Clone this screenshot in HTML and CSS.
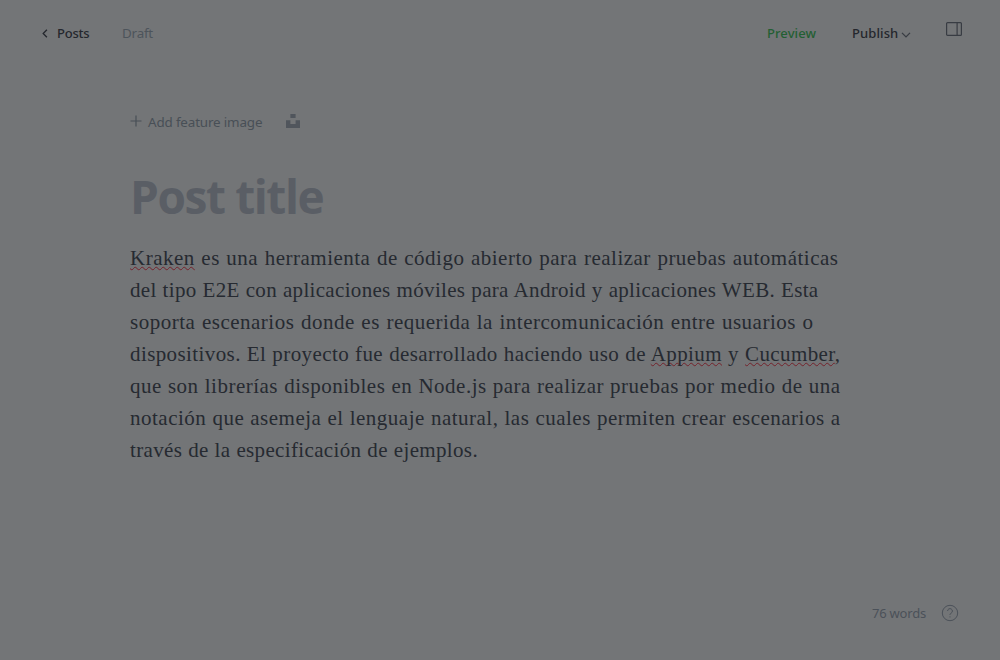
FILE: index.html
```html
<!DOCTYPE html>
<html lang="es">
<head>
<meta charset="utf-8">
<title>Editor</title>
<link rel="stylesheet" href="styles.css">
</head>
<body>
<div class="editor">
  <header class="topbar">
    <a class="back"><svg class="chevron-left" viewBox="0 0 6 9"><path d="M4.9.8 1.2 4.5l3.7 3.7"/></svg><span class="posts">Posts</span></a>
    <span class="draft">Draft</span>
    <div class="actions">
      <span class="preview">Preview</span>
      <span class="publish">Publish</span>
      <svg class="chevron-down" viewBox="0 0 10 6"><path d="m1 .9 4 4 4-4"/></svg>
      <svg class="sidebar-icon" viewBox="0 0 16 14"><rect x=".6" y=".6" width="14.8" height="12.8" rx="1"/><path d="M11.1.5v13"/></svg>
    </div>
  </header>
  <main class="content">
    <div class="feature">
      <svg class="plus" viewBox="0 0 12 12"><path d="M6 .5v11M.5 6h11"/></svg>
      <span class="add">Add feature image</span>
      <svg class="unsplash" viewBox="0 0 14 14"><path d="M4.4 0h5.2v4H4.4zM0 6.2h4.4v3.9h5.2V6.2H14V14H0z"/></svg>
    </div>
    <h1 class="title">Post title</h1>
    <p class="body">
      <span class="line l1"><u class="typo">Kraken</u> es una herramienta de código abierto para realizar pruebas automáticas</span>
      <span class="line l2">del tipo E2E con aplicaciones móviles para Android y aplicaciones WEB. Esta</span>
      <span class="line l3">soporta escenarios donde es requerida la intercomunicación entre usuarios o</span>
      <span class="line l4">dispositivos. El proyecto fue desarrollado haciendo uso de <u class="typo">Appium</u> y <u class="typo">Cucumber</u>,</span>
      <span class="line l5">que son librerías disponibles en Node.js para realizar pruebas por medio de una</span>
      <span class="line l6">notación que asemeja el lenguaje natural, las cuales permiten crear escenarios a</span>
      <span class="line l7">través de la especificación de ejemplos.</span>
    </p>
  </main>
  <footer class="footer">
    <span class="words">76 words</span>
    <svg class="help" viewBox="0 0 18 18"><circle cx="9" cy="9" r="7.7"/><path d="M6.6 7a2.4 2.4 0 1 1 3.6 2.1C9.3 9.6 9 10 9 11M9 12.4v1"/></svg>
  </footer>
</div>
</body>
</html>
```
FILE: styles.css
```css
* { box-sizing: border-box; }
body { margin: 0; background: #737577; font-family: "Open Sans", "Noto Sans", sans-serif; }
svg { display: block; flex: none; fill: none; stroke: currentColor; }
.editor { width: 1000px; height: 660px; display: flex; flex-direction: column; color: #24272d; }
.topbar { height: 66px; display: flex; align-items: center; padding: 0 38px 0 42px; font-size: 13.4px; line-height: 18px; white-space: nowrap; }
.back { display: flex; align-items: center; gap: 9px; width: 80px; }
.chevron-left { width: 6px; height: 9px; stroke-width: 1.3; }
.posts, .preview, .publish { font-family: "Noto Sans", sans-serif; font-weight: 500; font-size: 13px; }
.posts { letter-spacing: -.2px; }
.draft { color: #4d545b; font-family: "Noto Sans", sans-serif; letter-spacing: -.2px; }
.actions { margin-left: auto; display: flex; align-items: center; }
.preview { color: #235f33; width: 85px; letter-spacing: .1px; }
.publish { width: 49px; letter-spacing: .1px; }
.chevron-down { width: 10px; height: 6px; margin-top: 4px; stroke-width: 1.3; color: #383c43; }
.sidebar-icon { width: 16px; height: 14px; margin: -8px 0 0 35px; color: #383c43; stroke-width: 1.2; }
.content { padding: 46px 0 0 130px; flex: 1; }
.feature { display: flex; align-items: center; height: 20px; font-size: 14px; color: #484f56; }
.plus { width: 12px; height: 12px; margin-top: -2px; stroke-width: 1.2; }
.add { margin-left: 6px; width: 138px; font-family: "Noto Sans", sans-serif; font-size: 13.4px; letter-spacing: -.15px; white-space: nowrap; }
.unsplash { width: 14px; height: 14px; margin-top: -2px; fill: #50555c; stroke: none; }
.title { margin: 32px 0 0; height: 64px; line-height: 64px; font-size: 46px; font-weight: 700; letter-spacing: -1.4px; color: #5a5e65; white-space: nowrap; }
.body { margin: 14px 0 0; font-family: "Liberation Serif", serif; font-size: 21px; line-height: 32px; color: #262a31; }
.line { display: block; height: 32px; white-space: nowrap; text-align: justify; text-align-last: justify; letter-spacing: .5px; }
.l1 { width: 708.5px; }
.l2 { width: 688.5px; letter-spacing: .32px; }
.l3 { width: 683.5px; }
.l4, .l5, .l6 { width: 710.5px; }
.l4 { letter-spacing: .4px; }
.l7 { width: 348px; letter-spacing: .35px; }
.typo { text-decoration: underline wavy #74222b 1px; text-decoration-skip-ink: none; text-underline-offset: 1px; }
.footer { height: 94px; display: flex; justify-content: flex-end; align-items: center; padding: 0 41px 0 0; gap: 15px; color: #4b5159; font-family: "Noto Sans", sans-serif; font-size: 13px; }
.words { letter-spacing: -.2px; }
.help { width: 18px; height: 18px; stroke-width: 1; }
```
